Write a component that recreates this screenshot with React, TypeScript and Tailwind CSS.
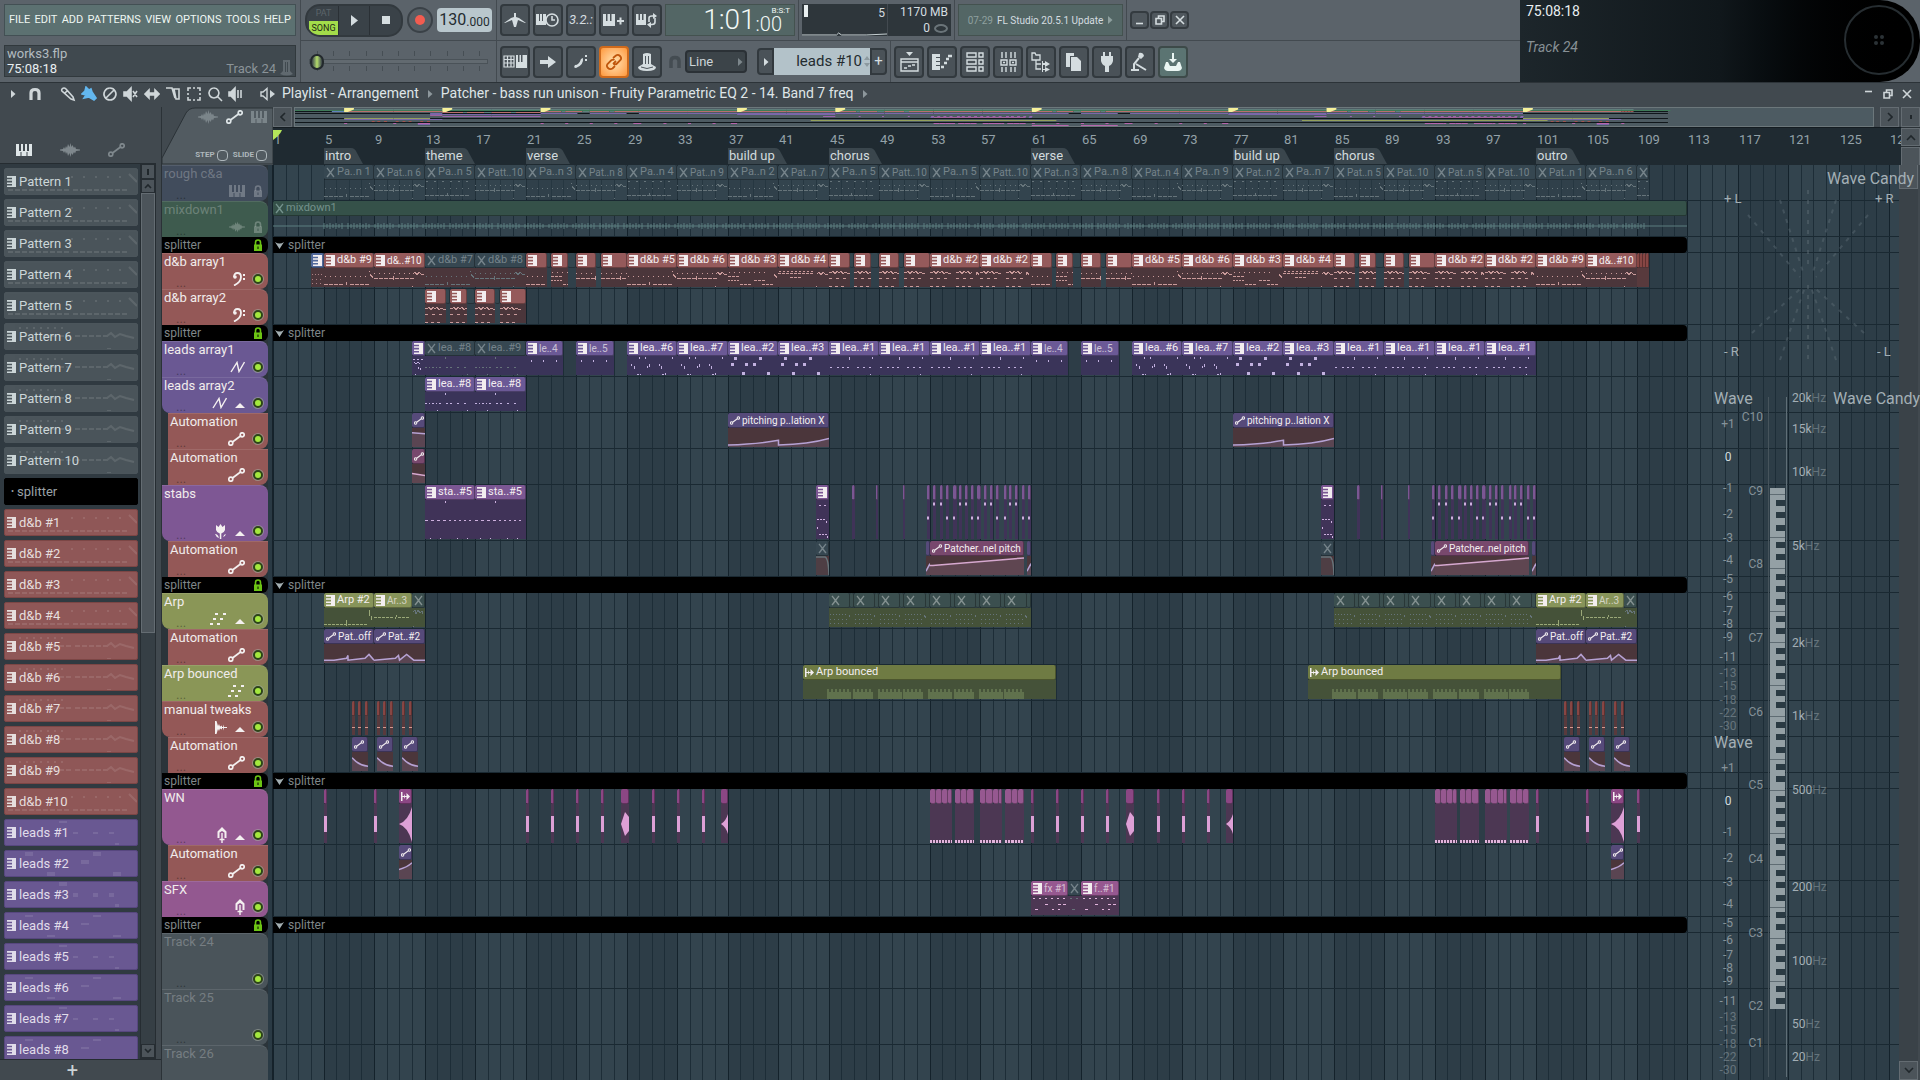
import type { ReactNode } from "react";
import clsx from "clsx";

const BAR = 12.625;
const BARS = 128.8;

const barX = (bar: number) => Math.round((bar - 1) * BAR);
const barW = (bar: number, len: number) => Math.max(barX(bar + len) - barX(bar), 2);

type Tone = "red" | "purple" | "violet" | "olive" | "bounced" | "pink" | "autoPurple" | "autoPink" | "blue" | "green" | "grey" | "wn" | "tweak";

type Clip = {
	at: number;
	len: number;
	label?: string;
	tone: Tone;
	muted?: boolean;
	notes?: string;
	curve?: string;
	icon?: "pat" | "auto" | "wave" | "none";
};

type Track = {
	name: string;
	h: number;
	color: string;
	icon?: string;
	arrow?: boolean;
	child?: boolean;
	parent?: boolean;
	splitter?: boolean;
	dim?: boolean;
	clips: Clip[];
};

const HEAD: Record<Tone, string> = {
	red: "bg-[#955a5b]",
	purple: "bg-[#6b5996]",
	violet: "bg-[#7b5793]",
	olive: "bg-[#87945a]",
	bounced: "bg-[#6f7b43]",
	pink: "bg-[#965890]",
	autoPurple: "bg-[#564a7a]",
	autoPink: "bg-[#78486d]",
	blue: "bg-[#52699b]",
	green: "bg-[#355149]",
	grey: "bg-[#34464f]",
	wn: "bg-[#8b4784]",
	tweak: "bg-[#874644]",
};

const BODY: Record<Tone, string> = {
	red: "bg-[#4b363b]",
	purple: "bg-[#3a3459]",
	violet: "bg-[#403358]",
	olive: "bg-[#455239]",
	bounced: "bg-[#455239]",
	pink: "bg-[#4c3753]",
	autoPurple: "bg-[#4b363b]",
	autoPink: "bg-[#4b363b]",
	blue: "bg-[#4b363b]",
	green: "bg-transparent",
	grey: "bg-transparent",
	wn: "bg-[#4c3753]",
	tweak: "bg-[#583a3d]",
};

const INK: Record<Tone, string> = {
	red: "#c99a9a",
	purple: "#c3b2e0",
	violet: "#cdb0de",
	olive: "#9aa878",
	bounced: "#7d9163",
	pink: "#e2b4dc",
	autoPurple: "#b6a2d4",
	autoPink: "#d6a8cf",
	blue: "#a98085",
	green: "#5d7f80",
	grey: "#536870",
	wn: "#dda0d6",
	tweak: "#d79a90",
};

const FILL: Record<string, string> = {
	red: "#b8706c",
	purple: "#7a67ab",
	violet: "#9a64ad",
	olive: "#93a05c",
	bounced: "#93a05c",
	pink: "#b565ac",
	autoPurple: "#7a67ab",
	autoPink: "#a0619b",
	blue: "#5f83bd",
	green: "#3f7a58",
	grey: "#5f7f7c",
	wn: "#b565ac",
	tweak: "#a0554f",
};

const dash = (y: number, from: number, to: number, w: number, gap: number) => {
	let d = "";
	for (let x = from; x < to; x += w + gap) {
		d += `M${x} ${y}h${w}`;
	}
	return d;
};

const TAIL = "M39 6l2 -2l2 3l2 -3l2 2l3 1M38 18v2";

const NOTES: Record<string, string> = {
	bassA: dash(8, 1, 44, 1, 4) + dash(16, 0, 20, 4, 1) + dash(16, 26, 44, 4, 1) + "M22 14l1 3M45 3v1M46 6l3 4",
	bassB: dash(5, 0, 36, 1, 4) + dash(10, 0, 17, 4, 1) + dash(10, 21, 38, 4, 1) + "M19 8l1 4" + TAIL,
	bassC: dash(4, 1, 40, 1, 4) + dash(8, 0, 12, 3, 1) + dash(12, 0, 12, 2, 1) + dash(12, 26, 38, 3, 1) + dash(16, 12, 22, 3, 1) + dash(16, 34, 44, 3, 1) + "M46 6l3 4",
	bassD: dash(3, 1, 36, 2, 2) + dash(5, 0, 36, 3, 1) + dash(9, 12, 22, 3, 1) + TAIL,
	busy: "M0 4l2 1l2 -2l2 3l2 -3l2 2l2 -2l2 3l2 -2l2 1h3M26 4l2 1l2 -2l2 3l2 -3l2 2l2 -2l2 3l2 -2" + dash(10, 0, 18, 3, 4) + dash(10, 26, 44, 3, 4) + dash(18, 0, 18, 3, 3) + dash(18, 26, 44, 3, 3) + dash(19, 0, 18, 3, 3) + "M46 7l1 -3l2 3",
	roughTop: dash(1, 1, 44, 2, 6) + dash(8, 1, 44, 1, 5) + dash(15, 0, 44, 4, 1) + "M22 13l1 3",
	lead: dash(11, 0, 22, 2, 5) + dash(11, 25, 46, 2, 5) + dash(11, 4, 18, 1, 6) + "M20 1v2M12 18v2M42 18v2",
	leadOne: dash(11, 1, 4, 2, 2) + dash(11, 8, 20, 2, 3) + dash(11, 28, 44, 2, 4) + "M20 1v3M43 1v2M41 18v2",
	leadFew: "M5 4v2M17 4v2M30 4v2",
	leadMix: "M4 8v2M7 10v3M20 10v2M22 8v3M32 8v2M34 10v3M12 1v2M18 1v2M45 1v2M10 18h2M13 18v2M35 18h2M38 17v3",
	leadPair: dash(3, 1, 12, 2, 2) + "M2 6l2 2l2 -2l2 2M8 12v2M3 18v2M6 11v2",
	stab: dash(20, 0, 20, 3, 3) + dash(20, 24, 46, 2, 3) + "M20 1v2M5 38v2M15 38v2M32 38v2M42 38v2",
	stabPair: dash(5, 3, 10, 2, 3) + dash(19, 1, 8, 2, 1) + dash(34, 3, 10, 2, 1) + "M10 21v2M1 27v2M0 39v2M11 36v2",
	arpA: dash(16, 0, 21, 3, 1) + dash(16, 24, 43, 3, 1) + "M22 12v6M45 2v6M47 8v4",
	arpB: dash(9, 0, 20, 3, 1) + dash(9, 24, 36, 3, 1) + "M21 11l2 -4",
	arpX: "M1 4l2 -2l1 4l2 -4l2 3l2 -2l1 3M1 18v2",
	arpDim: dash(6, 1, 19, 1, 2) + dash(11, 1, 19, 1, 3) + dash(15, 1, 19, 1, 3) + "M20 7l2 3",
	fx: dash(2, 2, 34, 2, 4) + dash(8, 14, 18, 3, 2) + dash(8, 27, 36, 3, 2) + dash(13, 4, 6, 3, 2) + dash(13, 21, 33, 2, 4) + dash(19, 0, 36, 3, 2),
	tick: "M0 11h4",
};

// curves live in a stretched 100x20 box
const CURVES: Record<string, string> = {
	saw: "M0 18Q30 17 50 13V18Q80 17 100 11",
	flat: "M0 5L100 6",
	flatLow: "M0 10L100 12",
	rise: "M0 10H3L100 2",
	arpOff: "M0 17H20L45 15L48 12V17L82 15L90 11L100 17",
	arpTwo: "M0 17L42 15L48 12L50 17L64 11L78 17H100",
	fall: "M0 6Q40 14 100 15",
	up: "M0 10Q60 8 100 3",
	corner: "M0 1H70Q95 2 100 20",
	sliver: "M0 16L100 8",
};

const c = (at: number, len: number, tone: Tone, label?: string, extra: Partial<Clip> = {}): Clip => ({ at, len, tone, label, ...extra });

const roughLabels = ["Pa..n 1", "Pat..n 6", "Pa..n 5", "Patt..10", "Pa..n 3", "Pat..n 8", "Pa..n 4", "Pat..n 9", "Pa..n 2", "Pat..n 7", "Pa..n 5", "Patt..10", "Pa..n 5", "Patt..10", "Pat..n 3", "Pa..n 8", "Pat..n 4", "Pa..n 9", "Pat..n 2", "Pa..n 7", "Pat..n 5", "Pat..10", "Pat..n 5", "Pat..10", "Pat..n 1", "Pa..n 6", ""];

const quad = (at: number, notes: string): Clip[] => [
	c(at, 1.7, "red", "", { notes }),
	c(at + 1.7, 0.3, "grey", undefined, { icon: "none" }),
	c(at + 2, 1.4, "red", "", { notes: notes === "busy" ? "busy" : "bassC" }),
	c(at + 3.4, 0.6, "grey", undefined, { icon: "none" }),
	c(at + 4, 1.6, "red", "", { notes: notes === "busy" ? "busy" : "bassB" }),
	c(at + 5.6, 0.4, "grey", undefined, { icon: "none" }),
	c(at + 6, 2, "red", "", { notes: notes === "busy" ? "busy" : "bassB" }),
];

const stripes = (list: number[], len: number, tone: Tone, notes?: string): Clip[] => list.map((at) => c(at, len, tone, undefined, { icon: "none", notes }));

const dnbRun = (at: number): Clip[] => [c(at, 4, "red", "d&b #5", { notes: "bassA" }), c(at + 4, 4, "red", "d&b #6", { notes: "bassB" }), c(at + 8, 4, "red", "d&b #3", { notes: "bassC" }), c(at + 12, 4, "red", "d&b #4", { notes: "bassD" }), ...quad(at + 16, "busy"), c(at + 24, 4, "red", "d&b #2", { notes: "busy" }), c(at + 28, 4, "red", "d&b #2", { notes: "busy" })];

const leadRun = (at: number): Clip[] => [
	c(at, 3, "purple", "le..4", { notes: "leadFew" }),
	c(at + 4, 3, "purple", "le..5", { notes: "leadFew" }),
	c(at + 8, 4, "purple", "lea..#6", { notes: "leadMix" }),
	c(at + 12, 4, "purple", "lea..#7", { notes: "leadMix" }),
	c(at + 16, 4, "purple", "lea..#2", { notes: "big" }),
	c(at + 20, 4, "purple", "lea..#3", { notes: "big" }),
	...[24, 28, 32, 36].map((d) => c(at + d, 4, "purple", "lea..#1", { notes: "leadOne" })),
];

const stabRun = (at: number): Clip[] => [
	c(at, 1, "violet", "", { notes: "stabPair" }),
	...stripes([at + 2.9, at + 4.8, at + 6.9], 0.16, "violet"),
	...stripes([8.8, 9.3, 9.8, 10.3, 10.9, 11.3, 11.8, 12.3, 12.8, 13.3, 13.8, 14.3, 14.9, 15.3, 15.8, 16.3, 16.8].map((d) => at + d), 0.24, "violet", "stabTick"),
];

const wnBlocks = (at: number): Clip[] =>
	[0, 0.5, 1, 1.5, 2, 2.5, 3, 4, 4.5, 5, 5.5, 6, 6.5, 7].map((d) => c(at + d, d === 1.5 || d === 5.5 ? 0.25 : 0.5, "pink", undefined, { icon: "none", notes: "wnBlock" }));

const wnRun = (at: number): Clip[] => [
	...stripes([0, 2, 4, 6, 10, 12, 14].map((d) => at + d), 0.25, "wn", "wnTick"),
	c(at + 7.55, 0.65, "wn", undefined, { icon: "none", notes: "wnDiamond" }),
	c(at + 15.5, 0.5, "wn", undefined, { icon: "none", notes: "wnCone" }),
];

const arpRun = (at: number): Clip[] =>
	[0, 2, 4, 6, 8, 10, 12, 14].flatMap((d) => [c(at + d, 1.7, "olive", "", { muted: true, notes: "arpDim" }), c(at + d + 1.7, 0.3, "olive", undefined, { muted: true, icon: "none" })]);

const arpEnds = (at: number): Clip[] => [c(at, 4, "olive", "Arp #2", { notes: "arpA" }), c(at + 4, 3, "olive", "Ar..3", { notes: "arpB" }), c(at + 7, 1, "olive", "", { muted: true, notes: "arpX" })];

const tweakAt = (at: number) => [0.25, 0.7, 1.25, 2.2, 2.75, 3.25, 4.2, 4.75].map((d) => at + d);

const RED = "bg-[#945857]";
const PURPLE = "bg-[#6a5893]";
const splitter: Track = { name: "splitter", h: 16, color: "bg-black", splitter: true, clips: [] };
const auto = (clips: Clip[]): Track => ({ name: "Automation", h: 36, color: RED, icon: "auto", child: true, clips });

const tracks: Track[] = [
	{
		name: "rough c&a",
		h: 36,
		color: "bg-[#414c5c]",
		icon: "piano",
		dim: true,
		clips: roughLabels.map((label, i) => c(5 + i * 4, i === 26 ? 1 : 4, "grey", label, { muted: true, notes: i % 4 === 2 ? "roughTop" : i % 2 ? "bassB" : "bassA" })),
	},
	{ name: "mixdown1", h: 36, color: "bg-[#3e5b4e]", icon: "wave", dim: true, clips: [c(1, 112, "green", "mixdown1", { muted: true, notes: "mixdown" })] },
	splitter,
	{
		name: "d&b array1",
		h: 36,
		color: RED,
		icon: "bass",
		clips: [
			c(4, 1, "blue", "", { notes: "arpDim" }),
			c(5, 4, "red", "d&b #9", { notes: "bassA" }),
			c(9, 4, "red", "d&..#10", { notes: "bassB" }),
			c(13, 4, "red", "d&b #7", { muted: true, notes: "bassA" }),
			c(17, 4, "red", "d&b #8", { muted: true, notes: "bassB" }),
			...quad(21, "bassA"),
			...dnbRun(29),
			...quad(61, "bassA"),
			...dnbRun(69),
			c(101, 4, "red", "d&b #9", { notes: "bassA" }),
			c(105, 4, "red", "d&..#10", { notes: "bassB" }),
			...stripes([109, 109.25, 109.5, 109.75], 0.25, "tweak"),
		],
	},
	{ name: "d&b array2", h: 36, color: RED, icon: "bass", clips: quad(13, "busy") },
	splitter,
	{
		name: "leads array1",
		h: 36,
		color: PURPLE,
		icon: "zig",
		clips: [c(12, 1, "purple", "", { notes: "leadPair" }), c(13, 4, "purple", "lea..#8", { muted: true, notes: "lead" }), c(17, 4, "purple", "lea..#9", { muted: true, notes: "lead" }), ...leadRun(21), ...leadRun(61)],
	},
	{ name: "leads array2", h: 36, color: PURPLE, icon: "zig", arrow: true, parent: true, clips: [c(13, 4, "purple", "lea..#8", { notes: "lead" }), c(17, 4, "purple", "lea..#8", { notes: "lead" })] },
	auto([c(12, 1, "autoPurple", "", { icon: "auto", curve: "flat" }), ...[37, 77].map((at) => c(at, 8, "autoPurple", "pitching p..lation X", { icon: "auto", curve: "saw" }))]),
	auto([c(12, 1, "autoPink", "", { icon: "auto", curve: "flatLow" })]),
	{
		name: "stabs",
		h: 56,
		color: "bg-[#7e5794]",
		icon: "tulip",
		arrow: true,
		parent: true,
		clips: [c(13, 4, "violet", "sta..#5", { notes: "stab" }), c(17, 4, "violet", "sta..#5", { notes: "stab" }), ...stabRun(44), ...stabRun(84)],
	},
	auto(
		[44, 84].flatMap((at) => [
			c(at, 1, "autoPink", "", { muted: true, icon: "auto", curve: "corner" }),
			c(at + 8.75, 0.25, "autoPurple", undefined, { icon: "none", curve: "sliver" }),
			c(at + 9, 7.5, "autoPink", "Patcher..nel pitch", { icon: "auto", curve: "rise" }),
			c(at + 16.75, 0.25, "autoPurple", undefined, { icon: "none", curve: "sliver" }),
		]),
	),
	splitter,
	{ name: "Arp", h: 36, color: "bg-[#8a9657]", icon: "notes", arrow: true, parent: true, clips: [...arpEnds(5), ...arpRun(45), ...arpRun(85), ...arpEnds(101)] },
	auto([5, 101].flatMap((at) => [c(at, 4, "autoPurple", "Pat..off", { icon: "auto", curve: "arpOff" }), c(at + 4, 4, "autoPurple", "Pat..#2", { icon: "auto", curve: "arpTwo" })])),
	{ name: "Arp bounced", h: 36, color: "bg-[#8a9657]", icon: "notes", clips: [43, 83].map((at) => c(at, 20, "bounced", "Arp bounced", { icon: "wave", notes: "grass" })) },
	{ name: "manual tweaks", h: 36, color: RED, icon: "hit", arrow: true, parent: true, clips: [...stripes(tweakAt(7), 0.24, "tweak", "tick"), ...stripes(tweakAt(103), 0.24, "tweak", "tick")] },
	auto([7.25, 9.25, 11.25, 103.25, 105.25, 107.25].map((at) => c(at, 1.25, "autoPurple", "", { icon: "auto", curve: "fall" }))),
	splitter,
	{
		name: "WN",
		h: 56,
		color: "bg-[#935890]",
		icon: "pen",
		arrow: true,
		parent: true,
		clips: [...stripes([5, 9, 101, 105, 109], 0.25, "wn", "wnTick"), ...[11, 107].map((at) => c(at, 1, "wn", "", { icon: "wave", notes: "wnCone" })), ...wnRun(21), ...wnBlocks(53), ...wnRun(61), ...wnBlocks(93)],
	},
	auto([11, 107].map((at) => c(at, 1, "autoPurple", "", { icon: "auto", curve: "up" }))),
	{ name: "SFX", h: 36, color: "bg-[#935890]", icon: "pen", clips: [c(61, 3, "pink", "fx #1", { notes: "fx" }), c(64, 1, "pink", "", { muted: true, notes: "fx" }), c(65, 3, "pink", "f..#1", { notes: "fx" })] },
	splitter,
	{ name: "Track 24", h: 56, color: "bg-[#4a545a]", dim: true, clips: [] },
	{ name: "Track 25", h: 56, color: "bg-[#4a545a]", dim: true, clips: [] },
	{ name: "Track 26", h: 56, color: "bg-[#4a545a]", dim: true, clips: [] },
];

const markers: [number, string][] = [
	[5, "intro"],
	[13, "theme"],
	[21, "verse"],
	[37, "build up"],
	[45, "chorus"],
	[61, "verse"],
	[77, "build up"],
	[85, "chorus"],
	[101, "outro"],
];

const patterns = [
	...Array.from({ length: 10 }, (_, i) => ({ name: `Pattern ${i + 1}`, tone: "grey" })),
	{ name: "splitter", tone: "black" },
	...Array.from({ length: 10 }, (_, i) => ({ name: `d&b #${i + 1}`, tone: "red" })),
	...Array.from({ length: 8 }, (_, i) => ({ name: `leads #${i + 1}`, tone: "purple" })),
];

/* ---------- icons ---------- */

const Svg = ({ w = 20, h = 20, children, className }: { w?: number; h?: number; children: ReactNode; className?: string }) => (
	<svg width={w} height={h} viewBox={`0 0 ${w} ${h}`} fill="none" stroke="currentColor" strokeWidth="1.6" className={clsx("shrink-0", className)} aria-hidden="true">
		{children}
	</svg>
);

const solid = { fill: "currentColor", stroke: "none" };

const PianoIcon = ({ className }: { className?: string }) => (
	<Svg w={16} h={12} className={className}>
		<path {...solid} d="M0 0H3V7H5V0H7V7H9V0H11V7H13V0H16V12H11.5V8H10.5V12H5.5V8H4.500V12H0Z" />
	</Svg>
);

const WaveIcon = ({ className }: { className?: string }) => (
	<Svg w={20} h={14} className={className}>
		<path {...solid} d="M0 6.500L3 6L4 4L5 6L6 3L7 5L8 1L9.500 4L10.500 0L11.500 4L12.500 2L14 5L15 3.500L16 6L20 6.500V7.500L16 8L15 10.500L14 9L12.500 12L11.500 10L10.500 14L9.500 10L8 13L7 9L6 11L5 8L4 10L3 8L0 7.500Z" />
	</Svg>
);

const AutoIcon = ({ className, w = 17, h = 14 }: { className?: string; w?: number; h?: number }) => (
	<svg width={w} height={h} viewBox="0 0 17 14" fill="none" stroke="currentColor" strokeWidth="1.7" className={clsx("shrink-0", className)} aria-hidden="true">
		<circle cx="2.800" cy="11.200" r="2" />
		<circle cx="14.200" cy="2.800" r="2" />
		<path d="M4.500 10L12.500 4" />
	</svg>
);

const PatIcon = () => (
	<Svg w={9} h={11}>
		<path {...solid} d="M0 0H9V11H0V9.500H5V8H0V6.500H5V4.800H0V3.300H5V1.700H0Z" />
	</Svg>
);

const CrossIcon = () => (
	<Svg w={9} h={11}>
		<path strokeWidth="1.400" d="M1 1Q2 2 4.500 5.500T8 10M8 1Q7 2 4.500 5.500T1 10" />
	</Svg>
);

const HitIcon = () => (
	<Svg w={9} h={9}>
		<path {...solid} d="M0 0H1.500V4H3L4 2V4H5.500V1L9 4.500L5.500 8V5H4V7L3 5H1.500V9H0Z" />
	</Svg>
);

const LockIcon = ({ className }: { className?: string }) => (
	<Svg w={10} h={12} className={className}>
		<path d="M2.500 6V3.500Q2.500 1 5 1T7.500 3.500V6" />
		<path {...solid} d="M1 5.500H9V12H1ZM4.500 7.500V10H5.500V7.500Z" fillRule="evenodd" />
	</Svg>
);

const Tri = ({ className }: { className?: string }) => (
	<Svg w={6} h={8} className={className}>
		<path {...solid} d="M1 0L5.500 4L1 8Z" />
	</Svg>
);

const TrackIcon = ({ name }: { name: string }) => {
	switch (name) {
		case "piano":
			return <PianoIcon />;
		case "wave":
			return <WaveIcon className="w-4" />;
		case "auto":
			return <AutoIcon />;
		case "bass":
			return (
				<Svg w={13} h={14}>
					<path strokeWidth="1.800" d="M2 5Q2 1 5.500 1T9 5Q9 10 2 13.500" />
					<circle {...solid} cx="3" cy="5" r="1.800" />
					<path {...solid} d="M11 2H13V4H11ZM11 6H13V8H11Z" />
				</Svg>
			);
		case "zig":
			return (
				<Svg w={15} h={12}>
					<path strokeWidth="1.400" d="M1 11L7 1.500L9 10.500L14.500 1" />
				</Svg>
			);
		case "tulip":
			return (
				<Svg w={12} h={15}>
					<path {...solid} d="M1 1L3.500 3L5.500 0L7.500 3L10 1V6Q9 9 6.300 9.500V15H4.800V9.500Q2 9 1 6ZM0 10Q3 10 4 14Q1 13 0 10ZM8 13Q9 10 11 10Q10 13 8 13Z" />
				</Svg>
			);
		case "notes":
			return (
				<Svg w={17} h={12}>
					<path strokeWidth="2" d="M0 11H3M3 6H6M5 1H8M7 11H10M10 6H13M13 1H16" />
				</Svg>
			);
		case "hit":
			return (
				<Svg w={12} h={13}>
					<path {...solid} d="M0 0H1.500L3 5L4 3L5 5.500L7 4.500V6H8V3.500L9 6H12V7H9L8 9.500V7H7V8.500L5 7.500L4 10L3 8L1.500 13H0Z" />
				</Svg>
			);
		default:
			return (
				<Svg w={10} h={16}>
					<path {...solid} d="M5 0L9.500 4.500V11H7.500V5.500L5 4L2.500 5.500V11H0.500V4.500Z" />
					<path strokeWidth="1.400" d="M5 6V16M2.500 12.500H7.500" />
				</Svg>
			);
	}
};

/* ---------- toolbar ---------- */

const ToolBtn = ({ children, label, className }: { children: ReactNode; label: string; className?: string }) => (
	<button aria-label={label} className={clsx("flex h-8 w-[30px] shrink-0 items-center justify-center rounded-sm border-2", className ?? "border-[#32393e] bg-[#4a5258] text-[#d5dde0]")}>
		{children}
	</button>
);

const Divider = () => <div className="h-full w-px shrink-0 bg-[#434a50]" />;

const MENUS = ["FILE", "EDIT", "ADD", "PATTERNS", "VIEW", "OPTIONS", "TOOLS", "HELP"];

const Toolbar = () => (
	<header className="flex h-[82px] shrink-0 bg-[#5b636a] text-[#d5dde0]">
		<div className="flex w-[301px] shrink-0 flex-col gap-[9px] border-r border-[#434a50] p-1">
			<nav className="flex h-8 items-center justify-between border border-[#435054] bg-[#5c7171] px-1 text-[11px] text-[#eef6f2]">
				{MENUS.map((m) => (
					<button key={m}>{m}</button>
				))}
			</nav>
			<div className="flex h-8 items-end justify-between border border-[#31393d] bg-[#40494f] px-[2px] text-[13px] leading-[15px]">
				<div>
					<p className="text-[#b3bcc0]">works3.flp</p>
					<p className="text-[#e8eef0]">75:08:18</p>
				</div>
				<div className="flex items-end gap-1 text-[#8a9398]">
					<span>Track 24</span>
					<Svg w={13} h={17} className="text-[#60696f]">
						<path {...solid} d="M3 1H10V12L13 15Q7 18 0 15L3 12Z" />
						<path stroke="#40494f" strokeWidth="1" d="M5.500 3V13M7.500 3V13" />
					</Svg>
				</div>
			</div>
		</div>

		<div className="flex w-[196px] shrink-0 flex-col border-r border-[#434a50]">
			<div className="flex h-[41px] items-center gap-1 border-b border-[#434a50] px-1">
				<div className="flex h-[33px] w-[98px] shrink-0 overflow-hidden rounded-[15px] border-2 border-[#32393e] bg-[#3a4248]">
					<button className="flex w-[31px] flex-col pl-[2px] text-center text-[9px] leading-[15px]">
						<span className="text-[#5c656a]">PAT</span>
						<span className="bg-[#a3dd4a] text-[#1f2a18]">SONG</span>
					</button>
					<button aria-label="Play" className="flex w-8 items-center justify-center border-x border-[#2a3035]">
						<Svg w={8} h={11}>
							<path {...solid} d="M1 0L8 5.500L1 11Z" />
						</Svg>
					</button>
					<button aria-label="Stop" className="flex flex-1 items-center justify-center">
						<span className="h-2 w-2 bg-[#d5dde0]" />
					</button>
				</div>
				<button aria-label="Record" className="flex h-[26px] w-[26px] shrink-0 items-center justify-center rounded-full border-2 border-[#3a4147] bg-[#565e64]">
					<span className="h-[10px] w-[10px] rounded-full bg-[#f25c50]" />
				</button>
				<div className="flex h-6 flex-1 items-center justify-center rounded-sm bg-[#b9c7cd] text-[16px] text-[#242c30]">
					130<span className="pt-[3px] text-[12px]">.000</span>
				</div>
			</div>
			<div className="relative flex flex-1 items-center px-2">
				<div className="absolute inset-x-4 top-[10px] flex h-5 justify-between">
					{Array.from({ length: 11 }, (_, i) => (
						<span key={i} className="w-px border-y-[5px] border-[#464e54]" />
					))}
				</div>
				<input
					type="range"
					defaultValue={0}
					aria-label="Main pitch"
					className="relative h-[5px] w-full appearance-none border border-[#4a5258] bg-[#626a70] [&::-webkit-slider-thumb]:h-4 [&::-webkit-slider-thumb]:w-[14px] [&::-webkit-slider-thumb]:appearance-none [&::-webkit-slider-thumb]:rounded-full [&::-webkit-slider-thumb]:border-2 [&::-webkit-slider-thumb]:border-[#23292d] [&::-webkit-slider-thumb]:bg-linear-to-r [&::-webkit-slider-thumb]:from-[#3b4348] [&::-webkit-slider-thumb]:via-[#b5dd6a] [&::-webkit-slider-thumb]:to-[#3b4348]"
				/>
			</div>
		</div>

		<div className="flex min-w-0 flex-1 flex-col">
			<div className="flex h-[41px] items-center gap-[3px] border-b border-[#434a50] pl-[3px]">
				<ToolBtn label="Metronome">
					<Svg w={22} h={18}>
						<path {...solid} d="M10 2H12V6L15 7L22 12H21L14 9L12 16H10L8 9L1 12H0L7 7L10 6Z" />
					</Svg>
				</ToolBtn>
				<ToolBtn label="Wait for input">
					<Svg w={24} h={16}>
						<path {...solid} d="M0 2H3V9H4V2H6V9H7V2H10V13H0Z" />
						<circle cx="16" cy="8" r="6" />
						<path d="M16 4V8H19" />
					</Svg>
				</ToolBtn>
				<ToolBtn label="Countdown">
					<span className="text-[13px] italic">3.2.:</span>
				</ToolBtn>
				<ToolBtn label="Overdub">
					<Svg w={22} h={16}>
						<path {...solid} d="M0 2H3V9H4.500V2H7V9H8.500V2H12V14H0Z" />
						<path strokeWidth="2" d="M14 9H21M17.500 5.500V12.500" />
					</Svg>
				</ToolBtn>
				<ToolBtn label="Loop record">
					<Svg w={22} h={16}>
						<path {...solid} d="M0 2H2.500V8H4V2H6V8H7.500V2H10V13H0Z" />
						<path d="M13 10V6Q13 4 16 4H18M19 6V10Q19 12.500 16 12.500H14" />
						<path {...solid} d="M17 1L21 4L17 7ZM15 10L11 12.500L15 16Z" />
					</Svg>
				</ToolBtn>
				<div className="relative flex h-8 w-[130px] shrink-0 items-center justify-end border border-[#44524f] bg-[#536665] pr-3 text-[28px] leading-none font-light text-[#f2f8f6]">
					1:01<span className="pt-2 text-[20px]">:00</span>
					<span className="absolute top-[2px] right-1 text-[8px] leading-[8px] font-normal">B:S:T</span>
				</div>
				<Divider />
				<div className="grid h-8 w-[149px] shrink-0 grid-cols-[86px_1fr] bg-[#2e363b] text-right text-[12px] leading-4 text-[#d5dde0]">
					<div className="flex flex-col justify-between border-r border-[#434a50]">
						<div className="flex justify-between pt-px pr-[2px] pl-[2px]">
							<span className="h-3 w-1 bg-[#e9eff0]" />
							<span>5</span>
						</div>
						<svg viewBox="0 0 86 6" className="h-[6px] w-full" fill="none" stroke="#c8d2d5">
							<path d="M0 5H35L37 3L40 5H65L86 4" />
						</svg>
					</div>
					<div className="pr-[3px]">
						<p>1170 MB</p>
						<p className="flex items-center justify-end gap-1">
							0
							<Svg w={14} h={9} className="text-[#6a7479]">
								<ellipse cx="7" cy="4.500" rx="6" ry="3.500" strokeWidth="2" />
							</Svg>
						</p>
					</div>
				</div>
				<Divider />
				<button className="flex h-8 w-[165px] shrink-0 items-center justify-center gap-1 border border-[#44524f] bg-[#536665] text-[10px] whitespace-nowrap">
					<span className="text-[#8fa09f]">07-29</span>
					<span>FL Studio 20.5.1 Update</span>
					<Tri className="text-[#8fa09f]" />
				</button>
				<Divider />
				{["Minimize", "Restore", "Close"].map((n) => (
					<button key={n} aria-label={n} className="-mr-[2px] flex h-[18px] w-[19px] shrink-0 items-center justify-center rounded-sm border-2 border-[#343b40] bg-[#4f575d]">
						<Svg w={10} h={10}>
							<path d={n === "Minimize" ? "M1 8.500H8" : n === "Restore" ? "M1 3.500H6.500V9H1ZM3.500 3V1H9V6.500H7" : "M1 1L9 9M9 1L1 9"} />
						</Svg>
					</button>
				))}
			</div>

			<div className="flex flex-1 items-center gap-[3px] pl-[3px]">
				<ToolBtn label="Typing keyboard">
					<Svg w={24} h={14}>
						<path strokeWidth="1.200" d="M1 1H11V12H1ZM1 4.500H11M1 8H11M4.500 1V12M8 1V12" />
						<path {...solid} d="M13 0H15V7H16.500V0H18V7H19.500V0H24V13H13Z" />
					</Svg>
				</ToolBtn>
				<ToolBtn label="Step edit">
					<Svg w={16} h={14}>
						<path {...solid} d="M0 5H8V1L16 7L8 13V9H0Z" />
					</Svg>
				</ToolBtn>
				<ToolBtn label="Legato">
					<Svg w={16} h={16}>
						<path {...solid} d="M2 11Q6 11 8 5L10 4Q11 11 3 14Q0 14 2 11ZM12 1H14V3H12ZM12 5H14V7H12Z" />
					</Svg>
				</ToolBtn>
				<ToolBtn label="Multilink" className="border-[#cf6a1c] bg-radial from-[#ffe2b0] to-[#ff9838] text-[#c0560c]">
					<Svg w={18} h={18}>
						<path strokeWidth="1.800" d="M8 11L11 8M8 5L11 2.500Q13 1 15 3T15.500 7L12 10.500Q10.500 12 8.500 11M10 13L7.500 15.500Q5 17 3 15T2.500 11L6 7.500Q8 6 9.500 7" />
					</Svg>
				</ToolBtn>
				<ToolBtn label="Tap">
					<Svg w={20} h={20}>
						<path {...solid} d="M6 2Q10 0 14 2V12L19 15Q19 19 10 19T1 15L6 12Z" />
						<path stroke="#4f575d" strokeWidth="1" d="M8.500 4V12M11.500 4V12M4 15Q10 18 16 15" />
					</Svg>
				</ToolBtn>
				<Svg w={14} h={14} className="ml-[3px] text-[#444c52]">
					<path strokeWidth="3.500" d="M3 13V6Q3 2.500 7 2.500T11 6V13" />
				</Svg>
				<label className="relative flex">
					<select aria-label="Snap" className="h-[23px] w-[62px] appearance-none rounded-sm border-2 border-[#2b3136] bg-[#3c4449] pl-[2px] text-[13px] text-[#cdd5d8]">
						<option>Line</option>
					</select>
					<Tri className="pointer-events-none absolute top-2 right-1 text-[#7c868b]" />
				</label>
				<div className="ml-[7px] flex h-[27px] w-[130px] shrink-0">
					<button aria-label="Pattern menu" className="flex w-[17px] items-center justify-center rounded-l-sm border-2 border-[#32393e] bg-[#4a5258]">
						<Tri />
					</button>
					<div className="flex flex-1 items-center justify-end gap-[2px] bg-[#b3c2c9] text-[15px] text-[#242c30]">
						leads #10
						<Svg w={6} h={13} className="text-[#8d9aa0]">
							<path {...solid} d="M0 5L3 1L6 5ZM0 8L3 12L6 8Z" />
						</Svg>
					</div>
					<button aria-label="Add pattern" className="w-[17px] rounded-r-sm border-2 border-[#32393e] bg-[#4a5258] text-[15px] leading-none">
						+
					</button>
				</div>
				<Divider />
				{[
					<Svg key="pl" w={19} h={20}>
						<path {...solid} d="M6 0H13L9.500 4Z" />
						<path strokeWidth="1.400" d="M1 7H18V19H1ZM1 10H18M4 16H7M8 14H11M12 13H15" />
					</Svg>,
					<Svg key="pr" w={20} h={18}>
						<path {...solid} d="M0 1H8V4H4V5H8V8H4V9H8V12H4V13H8V17H0Z" />
						<path strokeWidth="2.500" d="M9 14H12M12 10H15M14 6H17M16 3H20" />
					</Svg>,
					<Svg key="cr" w={18} h={20}>
						<path strokeWidth="1.400" d="M1 1H10V5H1ZM1 8H10V12H1ZM1 15H10V19H1ZM13 1H17V5H13ZM13 8H17V12H13ZM13 15H17V19H13Z" />
					</Svg>,
					<Svg key="mx" w={18} h={20}>
						<path strokeWidth="1.400" d="M3 0V6M7 0V6M3 15V20M7 15V20M12 0V6M16 0V6M12 15V20M16 15V20M2 8H8V13H2ZM11 8H17V13H11ZM4 10.500H6M13 10.500H15" />
					</Svg>,
					<Svg key="br" w={20} h={20}>
						<path strokeWidth="1.300" d="M1 1H4L5 3H9V8H1ZM5 8V17H10M5 12H10" />
						<path {...solid} d="M11 9H12V11H14V9L19 12L14 15V13H12V15H11ZM11 15H12V17H14V15L19 17.500L14 20V18H12V20H11Z" />
					</Svg>,
					<Svg key="pp" w={18} h={18}>
						<path {...solid} d="M1 0H9V3H5V14H1ZM6 4H12L16 8V18H6Z" />
					</Svg>,
					<Svg key="pg" w={14} h={20}>
						<path {...solid} d="M3 0H5V4H9V0H11V4H13V9Q12 13 9 14V20H5V14Q2 13 1 9V4H3Z" />
					</Svg>,
					<Svg key="lm" w={20} h={20}>
						<path {...solid} d="M9 1Q13 0 14 4L11 7L8 5ZM1 17H9V19H1Z" />
						<path strokeWidth="2" d="M9 6L4 12V18M6 12L16 18" />
					</Svg>,
				].map((icon, i) => (
					<ToolBtn key={i} label={`View ${i + 1}`}>
						{icon}
					</ToolBtn>
				))}
				<ToolBtn label="Download" className="border-[#3d4a49] bg-[#5b7472] text-[#eaf6f3]">
					<Svg w={18} h={18}>
						<path {...solid} d="M8 0H10V6H13L9 10L5 6H8ZM2 9H4L6 13H12L14 9H16L18 15Q17 18 14 18H4Q1 18 0 15Z" />
					</Svg>
				</ToolBtn>
			</div>
		</div>

		<div className="flex w-[400px] shrink-0 justify-between overflow-hidden rounded-r-[40px] bg-linear-to-r from-[#1d262b] via-[#10171b] to-black pl-[6px]">
			<div className="flex flex-col gap-5 text-[14px] leading-4">
				<span className="pt-[3px] text-[#e8eef0]">75:08:18</span>
				<span className="text-[#879095] italic">Track 24</span>
			</div>
			<svg viewBox="0 0 80 80" className="h-20 w-20" fill="none">
				<circle cx="39" cy="40" r="34" stroke="#262d31" strokeWidth="2" />
				<g fill="#2b3236">
					<circle cx="36" cy="37" r="2" />
					<circle cx="42" cy="37" r="2" />
					<circle cx="36" cy="43" r="2" />
					<circle cx="42" cy="43" r="2" />
				</g>
			</svg>
		</div>
	</header>
);

/* ---------- playlist window ---------- */

const TOOLS: [string, string, string][] = [
	["Draw", "text-[#cfd6d9]", "M2 3Q4 1 6 3L13 11L14 14L11 13L3 6Q1 5 2 3ZM5 7L8 4"],
	["Paint", "text-[#63b7ee]", "M5 1L8 4L10 3L11 6L15 12L13 14L8 11L3 12L5 9L1 8L4 5Z"],
	["Delete", "text-[#cfd6d9]", "M8 2A6 6 0 1 1 7.900 2M4 12L12 4"],
	["Mute", "text-[#cfd6d9]", "M1 6H4L8 2V14L4 10H1ZM10 5L14 11M14 5L10 11"],
	["Slip", "text-[#cfd6d9]", "M1 8L5 4V7H11V4L15 8L11 12V9H5V12Z"],
	["Slice", "text-[#cfd6d9]", "M1 2H7L10 12M9 3H14V13H11Z"],
	["Select", "text-[#cfd6d9]", "M2 5V2H5M7 2H9M11 2H14V5M14 7V9M14 11V14H11M9 14H7M5 14H2V11M2 9V7"],
	["Zoom", "text-[#cfd6d9]", "M7 2A5 5 0 1 1 6.900 2M11 11L15 15"],
	["Playback", "text-[#cfd6d9]", "M1 6H3L7 2V14L3 10H1ZM10 4V12M13 4V12"],
];

const FILLED = ["Paint", "Mute", "Slip", "Playback"];

const TitleBar = () => (
	<div className="flex h-[25px] shrink-0 items-center border-t border-[#2c3338] bg-[#41494f] pb-[3px] text-[#cfd6d9]">
		<div className="flex w-[273px] shrink-0 items-center pl-[10px]">
			<Tri />
			<Svg w={14} h={14} className="ml-3">
				<path strokeWidth="3.200" d="M3 13V6Q3 2.500 7 2.500T11 6V13" />
			</Svg>
			<div className="ml-[18px] flex gap-[5px]">
				{TOOLS.map(([name, color, d]) => (
					<button key={name} aria-label={name} className={color}>
						<Svg w={16} h={16}>
							<path d={d} fill={FILLED.includes(name) ? "currentColor" : "none"} />
						</Svg>
					</button>
				))}
			</div>
			<Svg w={15} h={14} className="ml-4">
				<path strokeWidth="1.400" d="M1 5H3L7 1.500V12.500L3 9H1Z" />
				<path {...solid} d="M10 3L15 7L10 11Z" />
			</Svg>
		</div>
		<div className="flex flex-1 items-center gap-2 pl-[9px] text-[14px] text-[#dfe5e7]">
			<span>Playlist - Arrangement</span>
			<Tri className="text-[#8d979c]" />
			<span>Patcher - bass run unison - Fruity Parametric EQ 2 - 14. Band 7 freq</span>
			<Tri className="text-[#8d979c]" />
		</div>
		<div className="flex gap-[9px] pr-2">
			{["M1 2.500H8", "M1 3.500H6.500V9H1ZM3.500 3V1H9V6.500H7", "M1 1L9 9M9 1L1 9"].map((d, i) => (
				<button key={d} aria-label={["Minimize playlist", "Restore playlist", "Close playlist"][i]}>
					<Svg w={10} h={10}>
						<path d={d} />
					</Svg>
				</button>
			))}
		</div>
	</div>
);

const PATTERN_BG: Record<string, string> = {
	grey: "bg-[#4b555b] border-[#4b555b] text-[#ccd6d8]",
	black: "bg-black border-black text-[#9aa3a6]",
	red: "bg-[#8f5757] border-[#7c4645] text-[#e6dedd]",
	purple: "bg-[#695892] border-[#57477f] text-[#e0dcea]",
};

const PatternPanel = () => (
	<aside className="flex w-[161px] shrink-0 flex-col bg-[#41494f]">
		<div className="flex h-14 shrink-0 items-end gap-7 pb-[6px] pl-4">
			<PianoIcon className="mb-px text-[#dfe6e8]" />
			<WaveIcon className="text-[#7f888d]" />
			<AutoIcon className="text-[#7f888d]" />
		</div>
		<div className="flex min-h-0 flex-1 pr-[5px]">
			<div className="flex flex-1 flex-col gap-[4px] overflow-hidden border-t border-[#252c31] bg-[#303a41] pt-[4px] pr-[2px] pl-1">
				{patterns.map((p, i) => (
					<button key={p.name} className={clsx("relative flex h-[27px] shrink-0 items-center gap-[3px] overflow-hidden rounded-xs border pl-[2px] text-left text-[13px]", PATTERN_BG[p.tone])}>
						{p.tone !== "black" && (
							<svg className="absolute inset-0 h-full w-full opacity-10" stroke="#fff" strokeWidth="2" fill="none" aria-hidden="true">
								{p.tone === "purple" ? (
									<path strokeWidth={i === 22 || i === 23 ? 4 : 2} d={i % 2 ? "M54 2h8M68 13h5M88 13h5M104 13h5M110 24h4" : "M20 3h8M88 3h8M76 11h8M42 23h8M108 23h8"} />
								) : (
									<path d={i % 10 < 5 ? dash(8, 66, 118, 2, 10) + dash(21, 3, 60, 5, 2) + dash(21, 68, 120, 5, 2) + "M124 5l8 8" : dash(4, 14, 60, 2, 5) + dash(12, 40, 62, 5, 2) + dash(12, 70, 100, 5, 2) + "M102 12l4 -3l4 4l5 -3l6 2l8 2M102 25h4"} />
								)}
							</svg>
						)}
						{p.tone === "black" ? <span className="pl-1 text-[9px]">•</span> : <PatIcon />}
						<span className="relative">{p.name}</span>
					</button>
				))}
			</div>
			<div className="flex w-4 shrink-0 flex-col border border-[#262d32] bg-[#363f45]">
				<button aria-label="Jump" className="flex h-[15px] shrink-0 items-center justify-center border border-[#262d32] bg-[#4c545a]">
					<span className="h-[6px] w-[2px] bg-[#20272b]" />
				</button>
				<ScrollBtn dir="up" />
				<div className="h-[440px] border border-[#646c72] bg-[#4c545a]" />
				<div className="flex-1" />
				<ScrollBtn dir="down" />
			</div>
		</div>
		<button aria-label="New pattern" className="h-[21px] shrink-0 border-t border-[#252c31] pr-4 text-[20px] leading-none text-[#ccd3d6]">
			+
		</button>
	</aside>
);

const ScrollBtn = ({ dir }: { dir: "up" | "down" }) => (
	<button aria-label={`Scroll ${dir}`} className="flex h-[14px] shrink-0 items-center justify-center border border-[#262d32] bg-[#4c545a] text-[#20272b]">
		<Svg w={8} h={6}>
			<path d={dir === "up" ? "M1 5L4 2L7 5" : "M1 1L4 4L7 1"} />
		</Svg>
	</button>
);

const Led = ({ name }: { name: string }) => <button aria-label={`Mute ${name}`} className="h-[10px] w-[10px] rounded-full border-2 border-[#2d4418] bg-[#a4e83e] ring-1 ring-[#a3aba0]/60" />;

const TrackHeader = ({ track }: { track: Track }) => {
	if (track.splitter) {
		return (
			<div className="flex h-4 shrink-0 items-center justify-between rounded-r-md bg-black pr-[5px] pl-[2px] text-[12px] text-[#7f8688]">
				{track.name}
				<LockIcon className="text-[#6cc414]" />
			</div>
		);
	}
	const locked = track.dim && track.icon;
	return (
		<div style={{ height: track.h }} className={clsx("flex shrink-0 flex-col justify-between border-t border-white/10 pb-[2px] pl-[2px]", track.color, track.child ? "ml-[6px] rounded-br-lg" : "rounded-r-lg", track.parent && "rounded-bl-lg")}>
			<span className={clsx("text-[13px] leading-[16px]", track.dim ? "text-white/25" : "text-[#f1ecec]")}>{track.name}</span>
			<div className={clsx("flex h-4 items-center justify-end gap-2 pr-[5px]", locked ? "text-white/25" : "text-[#f4f0f0]")}>
				<span className={clsx("mr-auto self-end text-[13px] leading-[8px] text-black/35", track.child ? "pl-[6px]" : "pl-3")}>...</span>
				{track.icon && <TrackIcon name={track.icon} />}
				{track.arrow && (
					<Svg w={10} h={5} className="mb-[3px] self-end">
						<path {...solid} d="M0 5L5 0L10 5Z" />
					</Svg>
				)}
				{locked ? <LockIcon /> : <Led name={track.name} />}
			</div>
		</div>
	);
};

const mixPath = () => {
	let d = "M0 10H1414";
	for (let x = barX(5); x < barX(110); x += 3) {
		if (x % 25 < 22) d += `M${x} ${x % 2 ? 7 : 8}V${x % 2 ? 13 : 12}`;
	}
	return d;
};

const grassPath = () => {
	let d = "";
	for (let g = 0; g < 8; g++) {
		const x0 = 2 * BAR + g * 2 * BAR;
		const n = g % 2 ? 10 : 12;
		for (let i = 0; i < n; i++) d += `M${Math.round(x0 + i * 2)} 20V${i % 2 ? 12 : 9}`;
	}
	return d;
};

const BIG = [
	[5, 9],
	[8, 3],
	[19, 9],
	[27, 9],
	[33, 3],
	[16, 18],
	[41, 18],
];

const ClipBody = ({ clip, w, h }: { clip: Clip; w: number; h: number }) => {
	const ink = clip.muted && clip.tone !== "green" ? "#66747a" : INK[clip.tone];
	const mid = h / 2;
	if (clip.curve) {
		return (
			<svg className="h-full w-full" viewBox="0 0 100 20" preserveAspectRatio="none" fill="none" aria-hidden="true">
				<path d={`${CURVES[clip.curve]}V20H0Z`} fill={ink} fillOpacity="0.15" />
				<path d={CURVES[clip.curve]} stroke={ink} strokeWidth="1.500" vectorEffect="non-scaling-stroke" />
			</svg>
		);
	}
	return (
		<svg width={w} height={h} fill="none" stroke={ink} aria-hidden="true">
			{clip.notes === "mixdown" && <path d={mixPath()} />}
			{clip.notes === "grass" && <path d={grassPath()} />}
			{clip.notes === "big" && BIG.map(([x, y]) => <rect key={x} x={x - 2} y={y - 2} width="3" height="3" fill={ink} stroke="none" />)}
			{clip.notes === "wnTick" && <rect y={mid - 8} width="3" height="16" fill={ink} stroke="none" />}
			{clip.notes === "wnCone" && <path d={`M0 ${mid}Q${w * 0.7} ${mid - 3} ${w} ${w > 8 ? 3 : 10}V${w > 8 ? h - 2 : h - 10}Q${w * 0.7} ${mid + 3} 0 ${mid}Z`} fill={ink} stroke="none" />}
			{clip.notes === "wnDiamond" && <path d={`M0 ${mid}L${w / 2} ${mid - 12}L${w} ${mid - 7}V${mid + 7}L${w / 2} ${mid + 12}Z`} fill={ink} stroke="none" />}
			{clip.notes === "wnBlock" && <path d={dash(h - 2, 0, w, 2, 1)} strokeWidth="4" />}
			{clip.notes === "stabTick" && <path d={Math.round(clip.at * 10) % 20 < 10 ? `M0 ${mid - 2}h2` : "M0 4h2"} strokeWidth="3" />}
			{clip.notes && NOTES[clip.notes] && <path d={NOTES[clip.notes]} shapeRendering="crispEdges" />}
		</svg>
	);
};

const headClass = (clip: Clip) => {
	if (!clip.muted) return clsx(HEAD[clip.tone], "text-[#f3eef0]");
	if (clip.tone === "green") return "bg-[#355149] text-[#74928c]";
	if (clip.tone === "olive") return "bg-[#3b4f4f] text-[#83908f]";
	return "bg-[#364751] text-[#75838a]";
};

const ClipView = ({ clip, h }: { clip: Clip; h: number }) => {
	const w = barW(clip.at, clip.len);
	const label = clip.label ?? "";
	const small = clip.len < 4 || clip.curve || (clip.len === 4 && (label.length > 7 || label.endsWith("10")));
	return (
		<div style={{ left: barX(clip.at), width: w }} className="absolute inset-y-0 flex flex-col overflow-hidden pb-px">
			<div className={clsx("flex h-[15px] shrink-0 items-center gap-[2px] rounded-xs border-r border-b border-black/30 whitespace-nowrap", clip.icon !== "none" && "pl-[2px]", small ? "text-[10px]" : "text-[11px]", headClass(clip))}>
				{clip.icon !== "none" && (clip.muted ? <CrossIcon /> : clip.icon === "auto" ? <AutoIcon w={10} h={9} /> : clip.icon === "wave" ? <HitIcon /> : <PatIcon />)}
				{label && <span className={clsx(clip.len < 4 && "opacity-70")}>{label}</span>}
			</div>
			<div className={clsx("min-h-0 flex-1 overflow-hidden", clip.tone === "grey" ? "bg-[#34464f]/40" : BODY[clip.tone])}>
				<ClipBody clip={clip} w={w} h={h - 16} />
			</div>
		</div>
	);
};

const GridLines = () => (
	<svg className="pointer-events-none absolute inset-0 h-full w-full" shapeRendering="crispEdges" aria-hidden="true">
		{Array.from({ length: 17 }, (_, i) => (
			<rect key={`b${i}`} x={barX(5 + i * 8)} y="0" width={barX(9) - barX(5)} height="100%" fill="#2d3d47" />
		))}
		{Array.from({ length: 129 }, (_, i) => (
			<rect key={i} x={barX(i + 1)} y="0" width="1" height="100%" fill={i % 4 ? "#1d2d37" : "#14222b"} />
		))}
	</svg>
);

const TrackLane = ({ track }: { track: Track }) => (
	<div style={{ height: track.h }} className="relative shrink-0 border-b border-[#1a2932]">
		{track.splitter ? (
			<div style={{ width: barX(113) }} className="flex h-4 items-center gap-1 rounded-r-sm bg-black pl-[2px] text-[12px] text-[#7f8688]">
				<Svg w={9} h={7}>
					<path {...solid} fill="#a4b0b3" d="M0 0Q4.500 3 9 0L4.500 7Z" />
				</Svg>
				splitter
			</div>
		) : (
			track.clips.map((clip, i) => <ClipView key={i} clip={clip} h={track.h} />)
		)}
	</div>
);

const Overview = () => {
	let y = 1;
	return (
		<div className="min-w-0 flex-1 overflow-hidden border border-[#6c777b] bg-[#4d5b62]">
			<svg className="h-full w-full" viewBox="0 0 128.500 18" preserveAspectRatio="none" aria-hidden="true">
				<rect width="111.800" height="18" fill="#4d5b62" />
				{tracks.slice(0, 23).map((t, i) => {
					const top = y;
					const h = (t.h / 768) * 17;
					y += h;
					if (t.splitter) return <rect key={i} y={Math.round(top)} width="111.800" height="1" fill="#10171b" />;
					return t.clips.filter((k) => !k.muted || t.dim).map((k, j) => <rect key={`${i}-${j}`} x={k.at - 1} y={Math.round(top)} width={k.len} height={Math.max(1, Math.round(h))} fill={FILL[k.tone]} />);
				})}
				{markers.map(([bar]) => (
					<path key={bar} d={`M${bar - 1} 0h.8v1.500l-.5 2.500h-.3z`} fill="#f6f09a" />
				))}
			</svg>
		</div>
	);
};

const Ruler = () => (
	<div className="relative h-[38px] overflow-hidden border-t border-[#141c21] bg-[#1f2a31] text-[13px]">
		{Array.from({ length: 33 }, (_, i) => (
			<span key={i} style={{ left: barX(1 + i * 4) + 1 }} className="absolute top-[2px] text-[#93a1a8]">
				{1 + i * 4}
			</span>
		))}
		<svg width="9" height="10" className="absolute top-[2px] left-0" aria-hidden="true">
			<path d="M0 0H9Q7 5 0 10Z" fill="#b5e65a" />
		</svg>
		{markers.map(([bar, name]) => (
			<span key={bar} style={{ left: barX(bar) }} className="absolute bottom-px flex h-4 leading-[15px] text-[#d3dbde]">
				<span className="bg-[#3a464d] pl-px">{name}</span>
				<svg width="12" height="16" aria-hidden="true">
					<path d="M0 0Q4 0 6 5L12 16H0Z" fill="#3a464d" />
				</svg>
			</span>
		))}
	</div>
);

const METER: [string, number][] = [
	["+1", 424],
	["0", 457],
	["-1", 488],
	["-2", 514],
	["-3", 538],
	["-4", 560],
	["-5", 579],
	["-6", 596],
	["-7", 611],
	["-8", 624],
	["-9", 637],
	["-11", 657],
	["-13", 673],
	["-15", 686],
	["-18", 700],
	["-22", 713],
	["-30", 726],
];

const FREQS: [string, number][] = [
	["20k", 398],
	["15k", 429],
	["10k", 472],
	["5k", 546],
	["2k", 643],
	["1k", 716],
	["500", 790],
	["200", 887],
	["100", 961],
	["50", 1024],
	["20", 1057],
];

const OCTAVES: [string, number][] = [
	["C10", 417],
	["C9", 491],
	["C8", 564],
	["C7", 638],
	["C6", 712],
	["C5", 785],
	["C4", 859],
	["C3", 933],
	["C2", 1006],
	["C1", 1043],
];

// transparent visualizer window floating over the playlist, 210px wide
const WaveCandy = () => (
	<div className="absolute top-0 right-0 h-full w-[210px] overflow-hidden whitespace-nowrap text-[#a3afb5]">
		<span className="absolute top-1 left-[117px] text-[16px] leading-5">Wave Candy</span>
		<span className="absolute top-[224px] left-[123px] text-[16px] leading-5">Wave Candy</span>
		<span className="absolute top-[224px] left-1 text-[16px] leading-5">Wave</span>
		<span className="absolute top-[568px] left-1 text-[16px] leading-5">Wave</span>
		<span className="absolute top-[26px] left-[14px] text-[13px] leading-4">+ L</span>
		<span className="absolute top-[26px] left-[165px] text-[13px] leading-4">+ R</span>
		<span className="absolute top-[179px] left-[14px] text-[13px] leading-4">- R</span>
		<span className="absolute top-[179px] left-[167px] text-[13px] leading-4">- L</span>
		<svg className="absolute top-5 left-9 h-[190px] w-[130px]" viewBox="0 0 130 190" stroke="#5d6d75" strokeOpacity="0.450" strokeWidth="2" strokeDasharray="4 6" aria-hidden="true">
			<path d="M62 5V85M34 15L58 90M90 15L66 90M2 30L54 92M122 30L70 92M62 100V180M34 175L58 105M90 175L66 105M6 148L54 104M118 148L70 104" />
		</svg>
		{[0, 344].map((off) =>
			METER.map(([t, y]) => (
				<span key={`${t}${off}`} style={{ top: y + off - 173 }} className={clsx("absolute left-1 w-7 text-center text-[12px] leading-4", t === "0" ? "text-[#d3dcdf]" : y > 670 ? "opacity-45" : "opacity-75")}>
					{t}
				</span>
			)),
		)}
		{OCTAVES.map(([t, y]) => (
			<span key={t} style={{ top: y - 173 }} className="absolute right-[157px] text-[12px] leading-4 opacity-75">
				{t}
			</span>
		))}
		{FREQS.map(([t, y]) => (
			<span key={t} style={{ top: y - 173 }} className="absolute left-[82px] text-[12px] leading-4">
				{t}
				<span className="opacity-45">Hz</span>
			</span>
		))}
		<svg className="absolute top-[232px] left-[58px] h-[683px] w-5" aria-hidden="true">
			<path d="M18.500 0V680" stroke="#5f6e76" />
			<path d="M0.500 0V680" stroke="#46545c" />
			<rect x="2" y="91" width="15" height="521" fill="#94a0a5" />
			{Array.from({ length: 7 }, (_, o) =>
				[12, 24, 37, 54, 66].map((k) => <rect key={`${o}-${k}`} x="8" y={91 + o * 74 + k} width="9" height="6" fill="#2a3a43" />),
			)}
			{Array.from({ length: 7 }, (_, o) =>
				[6, 49].map((k) => <path key={`${o}-${k}`} d={`M2 ${91.5 + o * 74 + k}h15`} stroke="#5f6c73" />),
			)}
		</svg>
	</div>
);

const Playlist = () => (
	<section className="relative flex min-w-0 flex-1 flex-col border-l border-[#2b3237] bg-[#41494f]">
		<div className="flex h-[58px] shrink-0">
			<div className="relative h-full w-[111px] shrink-0">
				<svg className="absolute inset-0" width="111" height="57" aria-hidden="true">
					<path d="M0 57V51L24 6Q27 1 33 1H111V57Z" fill="#525b61" stroke="#2b3237" />
				</svg>
				<div className="relative flex h-full flex-col items-end justify-between pt-[3px] pr-[6px] pb-1">
					<div className="flex items-center gap-2">
						<WaveIcon className="text-[#7b858a]" />
						<AutoIcon className="text-[#dfe6e8]" />
						<PianoIcon className="text-[#7b858a]" />
					</div>
					<div className="flex items-center gap-[5px] text-[8px] font-bold text-[#aeb7bb]">
						<label className="flex items-center gap-[2px]">
							STEP
							<input type="checkbox" className="h-[11px] w-[11px] appearance-none rounded-[4px] border border-[#aeb7bb]" />
						</label>
						<label className="flex items-center gap-[2px]">
							SLIDE
							<input type="checkbox" className="h-[11px] w-[11px] appearance-none rounded-[4px] border border-[#aeb7bb]" />
						</label>
					</div>
				</div>
			</div>
			<div className="flex min-w-0 flex-1 flex-col">
				<div className="flex h-5 shrink-0 gap-[2px]">
					<button aria-label="Scroll left" className="flex w-[19px] items-center justify-center border border-[#646c72] bg-[#4c545a] text-[#20272b]">
						<Svg w={6} h={10}>
							<path d="M5 1L1 5L5 9" />
						</Svg>
					</button>
					<Overview />
					<button aria-label="Scroll right" className="mr-[2px] ml-1 flex w-[19px] items-center justify-center border border-[#646c72] bg-[#4c545a] text-[#20272b]">
						<Svg w={6} h={10}>
							<path d="M1 1L5 5L1 9" />
						</Svg>
					</button>
				</div>
				<Ruler />
			</div>
			<div className="flex w-[19px] shrink-0 flex-col gap-px bg-[#2b3237]">
				<button aria-label="Playlist options" className="flex h-5 items-center justify-center border border-[#646c72] bg-[#4c545a]">
					<span className="h-1 w-[2px] bg-[#20272b]" />
				</button>
				<button aria-label="Scroll playlist up" className="flex h-[18px] items-center justify-center border border-[#646c72] bg-[#4c545a] text-[#20272b]">
					<Svg w={10} h={7}>
						<path d="M1 6L5 2L9 6" />
					</Svg>
				</button>
				<div className="flex-1 border-x border-t border-[#646c72] bg-[#4c545a]" />
			</div>
		</div>
		<div className="flex min-h-0 flex-1">
			<div className="flex w-[106px] shrink-0 flex-col overflow-hidden bg-[#2b343a]">
				{tracks.map((t, i) => (
					<TrackHeader key={i} track={t} />
				))}
			</div>
			<div className="w-[5px] shrink-0 border-r border-[#16222a] bg-[#2a3a44]" />
			<div className="relative flex min-w-0 flex-1 flex-col overflow-hidden bg-[#33444e]" style={{ maxWidth: BARS * BAR }}>
				<GridLines />
				{tracks.map((t, i) => (
					<TrackLane key={i} track={t} />
				))}
			</div>
			<div className="flex w-[19px] shrink-0 flex-col bg-[#3a4248]">
				<div className="h-6 border-x border-b border-[#646c72] bg-[#4c545a]" />
				<div className="flex-1" />
				<button aria-label="Scroll playlist down" className="flex h-[19px] items-center justify-center border border-[#646c72] bg-[#4c545a] text-[#20272b]">
					<Svg w={10} h={7}>
						<path d="M1 1L5 5L9 1" />
					</Svg>
				</button>
			</div>
		</div>
		<div className="pointer-events-none absolute inset-x-0 top-[58px] bottom-0">
			<WaveCandy />
		</div>
	</section>
);

const App = () => (
	<div className="flex h-screen flex-col overflow-hidden bg-[#41494f] font-['Roboto','Open_Sans',sans-serif]">
		<Toolbar />
		<TitleBar />
		<main className="flex min-h-0 flex-1">
			<PatternPanel />
			<Playlist />
		</main>
	</div>
);

export default App;
